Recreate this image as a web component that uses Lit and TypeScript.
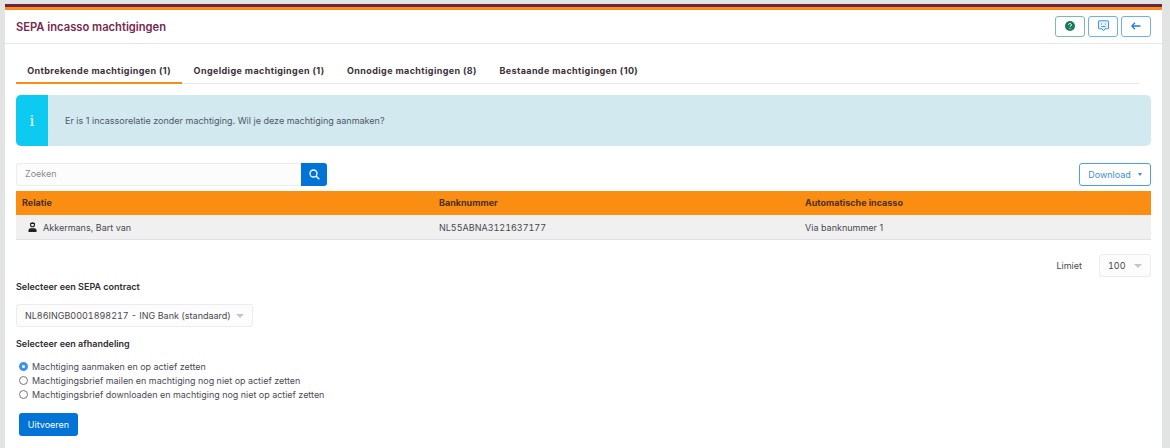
import { LitElement, html, css } from "lit";
import { customElement } from "lit/decorators.js";

@customElement("app-root")
export class AppRoot extends LitElement {
  static styles = css`
    :host { display: block; width: 1170px; height: 448px; overflow: hidden; background: #e2e3e3; font-family: Inter, "Noto Sans", sans-serif; font-size: 9px; color: #4a4a55; box-sizing: border-box; padding: 4px 8px 0 5px; }
    * { box-sizing: border-box; }
    .stripe1 { height: 3px; background: linear-gradient(#5a2a4a, #7b1f4b); }
    .stripe2 { height: 3px; background: #f98e13; }
    .page { background: #fff; height: 438px; }
    .head { height: 34px; border-bottom: 1px solid #e6e8e8; display: flex; align-items: center; justify-content: space-between; padding: 0 11px; }
    h1 { margin: 0; font-size: 11.2px; font-weight: 600; color: #76284f; }
    .btns { display: flex; gap: 3px; margin-bottom: 1px; }
    .ib { width: 30px; height: 21px; border-radius: 3px; border: 1px solid #6db2ee; display: flex; align-items: center; justify-content: center; background: #fff; }
    .ib.green { border-color: #7dbba3; }
    .body { padding: 0 11px; }
    .tabs { display: flex; gap: 0; margin-top: 15px; height: 25px; border-bottom: 1px solid #e6e8e8; margin-right: 12px; }
    .tab { padding: 0 11.25px; height: 25px; line-height: 24px; font-weight: 700; font-size: 9px; letter-spacing: .39px; color: #3b3038; }
    .tab.on { border-bottom: 2px solid #f98e13; }
    .alert { margin-top: 11px; height: 51px; display: flex; align-items: center; background: #d1e9ef; border-radius: 5px; overflow: hidden; }
    .alert .bar { width: 32px; height: 100%; background: #0dcaf0; color: #fff; display: flex; align-items: center; justify-content: center; font-family: "DejaVu Serif", serif; font-size: 15px; }
    .alert .msg { margin-left: 17px; color: #50586a; }
    .tools { margin-top: 17px; display: flex; justify-content: space-between; height: 23px; }
    .search { display: flex; width: 311px; }
    .search .inp { flex: 1; border: 1px solid #eceeee; border-right: 0; border-radius: 3px 0 0 3px; background: #fcfcfc; padding-left: 8px; line-height: 20px; color: #8b8b8b; }
    .search .go { width: 26px; background: #0274d6; border-radius: 0 3px 3px 0; display: flex; align-items: center; justify-content: center; }
    .dl { width: 72px; border: 1px solid #4a9fe8; border-radius: 3px; color: #3c8fdc; display: flex; align-items: center; justify-content: center; gap: 7px; }
    .caret { width: 0; height: 0; border-left: 2.5px solid transparent; border-right: 2.5px solid transparent; border-top: 3px solid #3c8fdc; }
    .table { margin-top: 5px; }
    .row { display: grid; grid-template-columns: 417px 366px 1fr; align-items: center; padding-left: 6px; }
    .th { height: 24px; background: #f98e13; font-weight: 700; color: #4f2f14; padding-bottom: 2px; }
    .td { height: 25px; background: #f0f0f0; border-bottom: 1px solid #e0e0e0; color: #48484f; }
    .rel { display: flex; align-items: center; gap: 6px; padding-left: 6px; }
    .num { font-variant-numeric: tabular-nums; white-space: nowrap; }
    .limit { display: flex; justify-content: flex-end; align-items: center; gap: 17px; margin-top: 14px; height: 23px; }
    .sel { border: 1px solid #ececec; border-radius: 3px; background: #fcfcfc; display: flex; align-items: center; justify-content: space-between; height: 23px; padding: 0 8px 0 8px; color: #4a4a4f; }
    .sel.lim { width: 52px; }
    .sel.con { width: 237px; }
    .c2 { width: 0; height: 0; border-left: 4px solid transparent; border-right: 4px solid transparent; border-top: 4px solid #c4c4c4; }
    .lbl { font-weight: 600; color: #2f2f33; height: 12px; line-height: 12px; }
    .l1 { margin-top: 4px; margin-bottom: 11px; }
    .l2 { margin-top: 11px; margin-bottom: 9px; }
    .radio { display: flex; align-items: center; gap: 4px; height: 14px; padding-left: 3px; font-size: 8.94px; }
    .dot { width: 9px; height: 9px; border-radius: 50%; border: 1px solid #777; }
    .dot.on { border: 3px solid #3d92ee; background: #fff; }
    .run { margin: 12px 0 0 3px; width: 59px; height: 23px; background: #0274d6; border-radius: 3px; color: #fff; display: flex; align-items: center; justify-content: center; }
  `;
  render() {
    return html`
      <div class="stripe1"></div><div class="stripe2"></div>
      <div class="page">
        <div class="head">
          <h1>SEPA incasso machtigingen</h1>
          <div class="btns">
            <div class="ib green"><svg width="10" height="10" viewBox="0 0 10 10"><circle cx="5" cy="5" r="5" fill="#1a7a5a"/><path d="M3.6 3.9a1.4 1.4 0 1 1 2.2 1.1c-.5.3-.8.5-.8 1" fill="none" stroke="#fff" stroke-width="1"/><circle cx="5" cy="7.6" r=".6" fill="#fff"/></svg></div>
            <div class="ib"><svg width="11" height="12" viewBox="0 0 11 12"><path d="M1 .8h9a.5.5 0 0 1 .5.5v7a.5.5 0 0 1-.5.5H7l-1.5 2L4 8.800H1a.5.5 0 0 1-.5-.5v-7A.5.5 0 0 1 1 .8z" fill="#e4f0fb" stroke="#2e8ae0" stroke-width=".9"/><path d="M3.500 3.500v1M7.500 3.500v1M3.500 6.500h4" stroke="#2e8ae0" stroke-width=".9"/></svg></div>
            <div class="ib"><svg width="10" height="8" viewBox="0 0 10 8"><path d="M9.500 4H1M4 .7 .8 4 4 7.300" fill="none" stroke="#1f7fdc" stroke-width="1.300"/></svg></div>
          </div>
        </div>
        <div class="body">
          <div class="tabs">
            <div class="tab on">Ontbrekende machtigingen (1)</div>
            <div class="tab">Ongeldige machtigingen (1)</div>
            <div class="tab">Onnodige machtigingen (8)</div>
            <div class="tab">Bestaande machtigingen (10)</div>
          </div>
          <div class="alert"><div class="bar">i</div><div class="msg">Er is 1 incassorelatie zonder machtiging. Wil je deze machtiging aanmaken?</div></div>
          <div class="tools">
            <div class="search"><div class="inp">Zoeken</div><div class="go"><svg width="11" height="11" viewBox="0 0 11 11"><circle cx="4.500" cy="4.500" r="3.500" fill="none" stroke="#fff" stroke-width="1.300"/><path d="M7.200 7.200 10.300 10.300" stroke="#fff" stroke-width="1.500"/></svg></div></div>
            <div class="dl">Download <span class="caret"></span></div>
          </div>
          <div class="table">
            <div class="row th"><div>Relatie</div><div>Banknummer</div><div>Automatische incasso</div></div>
            <div class="row td"><div class="rel"><svg width="9" height="10" viewBox="0 0 9 10"><circle cx="4.500" cy="2.700" r="2" fill="none" stroke="#222" stroke-width="1.100"/><path d="M2 1.500h5" stroke="#222"/><path d="M.5 10V8.200C.5 6.800 2 6.200 3 6.200h3c1 0 2.500.6 2.500 2V10z" fill="#222"/></svg>Akkermans, Bart van</div><div class="num">NL55ABNA3121637177</div><div>Via banknummer 1</div></div>
          </div>
          <div class="limit"><span>Limiet</span><div class="sel lim"><span class="num">100</span><span class="c2"></span></div></div>
          <div class="lbl l1">Selecteer een SEPA contract</div>
          <div class="sel con"><span class="num">NL86INGB0001898217 - ING Bank (standaard)</span><span class="c2"></span></div>
          <div class="lbl l2">Selecteer een afhandeling</div>
          <div class="radio"><span class="dot on"></span>Machtiging aanmaken en op actief zetten</div>
          <div class="radio"><span class="dot"></span>Machtigingsbrief mailen en machtiging nog niet op actief zetten</div>
          <div class="radio"><span class="dot"></span>Machtigingsbrief downloaden en machtiging nog niet op actief zetten</div>
          <div class="run">Uitvoeren</div>
        </div>
      </div>
    `;
  }
}
